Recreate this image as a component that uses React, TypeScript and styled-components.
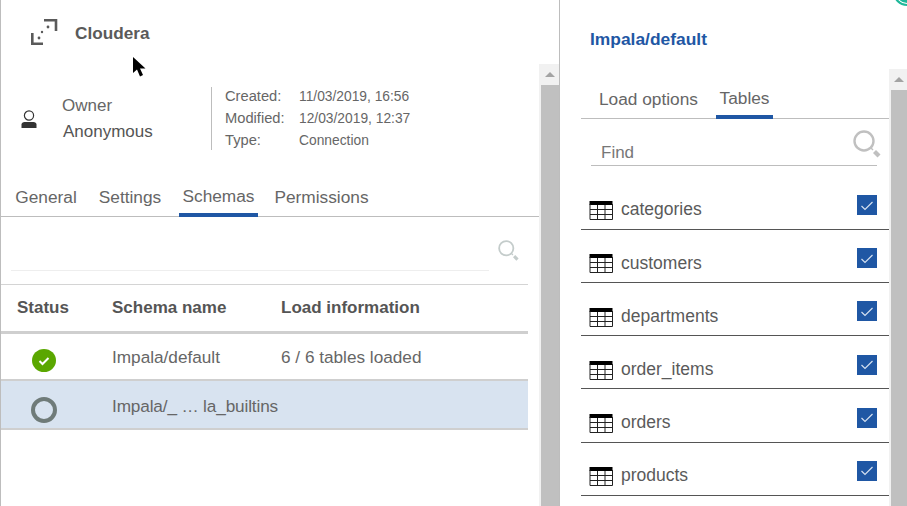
import React from "react";
import styled, { createGlobalStyle } from "styled-components";

const GlobalStyle = createGlobalStyle`
  html, body {
    margin: 0;
    padding: 0;
    background: #fff;
    overflow: hidden;
  }
  * {
    box-sizing: border-box;
  }
`;

const Page = styled.div`
  position: relative;
  display: flex;
  width: 907px;
  height: 506px;
  overflow: hidden;
  font-family: "Liberation Sans", Arial, sans-serif;
  color: #5a5a5a;
`;

const LeftPanel = styled.section`
  display: flex;
  width: 560px;
  flex-shrink: 0;
  border-left: 1px solid #bdbdbd;
  border-right: 1px solid #bdbdbd;
`;

const RightPanel = styled.section`
  display: flex;
  flex: 1;
  min-width: 0;
`;

const Column = styled.div`
  flex: 1;
  min-width: 0;
`;

const RightColumn = styled(Column)`
  padding: 28px 0 0 21px;
`;

const Scrollbar = styled.div<{ $top: number; $width: number }>`
  width: ${(p) => p.$width}px;
  flex-shrink: 0;
  margin-top: ${(p) => p.$top}px;
  padding-left: 2px;
  background: #f1f1f1;
  display: flex;
  flex-direction: column;
`;

const ScrollUp = styled.div`
  height: 21px;
  flex-shrink: 0;
  display: flex;
  align-items: center;
  justify-content: center;
  &::before {
    content: "";
    border-left: 5px solid transparent;
    border-right: 5px solid transparent;
    border-bottom: 5px solid #a3a3a3;
  }
`;

const ScrollThumb = styled.div`
  flex: 1;
  background: #c0c0c0;
`;

const Header = styled.header`
  display: flex;
  align-items: center;
  gap: 17px;
  height: 66px;
  padding-left: 29px;
  svg {
    margin-top: -2px;
  }
`;

const Title = styled.h1`
  margin: 0;
  font-size: 17.2px;
  font-weight: 700;
  color: #5a5a5a;
`;

const Summary = styled.div`
  display: flex;
  height: 63px;
  margin-top: 21px;
`;

const Owner = styled.div`
  display: flex;
  width: 211px;
  align-items: center;
  padding-left: 20px;
  border-right: 1px solid #bdbdbd;
`;

const OwnerText = styled.div`
  margin-left: 25px;
  display: flex;
  flex-direction: column;
  gap: 7px;
`;

const OwnerLabel = styled.span`
  font-size: 17px;
  line-height: 19px;
  color: #666;
`;

const OwnerName = styled.span`
  font-size: 17px;
  line-height: 19px;
  margin-left: 1px;
  color: #555;
`;

const Meta = styled.dl`
  margin: -2px 0 0 13px;
  display: grid;
  grid-template-columns: 74px auto;
  grid-auto-rows: 22px;
  align-items: center;
  color: #666;
  dt,
  dd {
    margin: 0;
  }
  dt {
    font-size: 14.7px;
  }
  dd {
    font-size: 13.8px;
  }
`;

const Tabs = styled.nav<{ $inset: number }>`
  display: flex;
  height: 46px;
  border-bottom: 1px solid #bdbdbd;
  align-items: stretch;
  padding-left: ${(p) => p.$inset}px;
`;

const LeftTabs = styled(Tabs)`
  margin-top: 21px;
`;

const Tab = styled.a<{ $active?: boolean; $width: number }>`
  width: ${(p) => p.$width}px;
  display: flex;
  justify-content: center;
  align-items: flex-end;
  font-size: 17.3px;
  line-height: 20px;
  white-space: nowrap;
  padding-bottom: ${(p) => (p.$active ? 7 : 10)}px;
  color: #666;
  margin-bottom: -1px;
  border-bottom: ${(p) => (p.$active ? "4px solid #1f57a4" : "0 solid transparent")};
`;

const SearchRow = styled.div`
  display: flex;
  height: 68px;
  margin-right: 11px;
  padding-left: 10px;
  border-bottom: 1px solid #d4d4d4;
`;

const SearchField = styled.div`
  flex: 1;
  height: 54px;
  border-bottom: 1px solid #eeeeee;
`;

const SearchButton = styled.div`
  width: 39px;
  padding: 23px 0 0 9px;
`;

const SchemaTable = styled.div`
  margin-right: 11px;
`;

const SchemaHead = styled.div`
  display: grid;
  grid-template-columns: 111px 169px 1fr;
  height: 49px;
  padding-bottom: 1px;
  align-items: center;
  border-bottom: 3px solid #cfcfcf;
  font-size: 17px;
  font-weight: 700;
  color: #555;
`;

const HeadCell = styled.span`
  &:first-child {
    padding-left: 16px;
  }
`;

const SchemaRow = styled.div<{ $selected?: boolean; $height: number }>`
  display: grid;
  grid-template-columns: 111px 169px 1fr;
  height: ${(p) => p.$height}px;
  align-items: start;
  padding-top: ${(p) => (p.$selected ? 2 : 0)}px;
  background: ${(p) => (p.$selected ? "#d8e3f0" : "transparent")};
  border-bottom: 2px solid #cfcfcf;
  font-size: 17.2px;
  line-height: 20px;
  color: #666;
`;

const StatusCell = styled.div`
  display: flex;
  justify-content: center;
  width: 86px;
  margin-top: 15px;
`;

const TextCell = styled.span<{ $tight?: boolean }>`
  margin-top: 13px;
  white-space: nowrap;
  letter-spacing: ${(p) => (p.$tight ? "-0.14px" : "normal")};
`;

const Done = styled.span`
  width: 24px;
  height: 23px;
  border-radius: 50%;
  background: #5aa700;
  display: flex;
  align-items: center;
  justify-content: center;
`;

const Pending = styled.span`
  width: 26px;
  height: 26px;
  margin-top: -1px;
  border-radius: 50%;
  border: 4.5px solid #6f7b79;
`;

const PanelTitle = styled.h2`
  margin: 0 0 0 9px;
  font-size: 17.4px;
  line-height: 22px;
  font-weight: 700;
  color: #1f57a4;
`;

const RightTabs = styled(Tabs)`
  margin-top: 23px;
`;

const Find = styled.div`
  display: flex;
  align-items: flex-end;
  justify-content: space-between;
  height: 47px;
  margin: 0 12px 0 10px;
  border-bottom: 1px solid #bdbdbd;
  padding: 0 0 2px 10px;
  position: relative;
  font-size: 17px;
  color: #777;
`;

const FindIcon = styled.span`
  position: absolute;
  right: -4px;
  top: 11px;
`;

const TableList = styled.ul`
  list-style: none;
  margin: 10.85px 0 0;
  padding: 0;
`;

const TableRow = styled.li`
  display: flex;
  height: 53.15px;
  align-items: flex-start;
  padding: 24.5px 12px 0 8px;
  border-bottom: 1px solid #555;
  font-size: 17.5px;
  line-height: 20px;
  color: #5a5a5a;
`;

const TableName = styled.span`
  flex: 1;
  margin: -1.95px 0 0 8px;
`;

const Check = styled.span`
  width: 20px;
  height: 20px;
  margin-top: -6.2px;
  background: #1f57a4;
  display: flex;
  align-items: center;
  justify-content: center;
`;

const Cursor = styled.svg`
  position: absolute;
  left: 132px;
  top: 57px;
`;

const Corner = styled.span`
  position: absolute;
  right: -14px;
  top: -22px;
  width: 28px;
  height: 28px;
  border-radius: 50%;
  border: 2px solid #1fb89a;
  box-shadow: inset 0 0 0 1px #fff;
  background: #1fb89a;
`;

const Expand = () => (
  <svg width="28" height="26" viewBox="0 0 28 26" fill="none">
    <path d="M14 1.300h12V12M2.300 14v10.700H13" stroke="#5a5a5a" strokeWidth="2.6" />
    <g fill="#5a5a5a">
      <circle cx="18" cy="8" r="1.4" />
      <circle cx="12" cy="13" r="1.2" />
      <circle cx="9" cy="19" r="1.4" />
    </g>
  </svg>
);

const UserIcon = () => (
  <svg width="16" height="18" viewBox="0 0 16 18" fill="none">
    <circle cx="8" cy="5.500" r="4.600" stroke="#333" strokeWidth="1.2" />
    <path d="M0.500 18v-3.500c0-1.600 1.400-2.500 3-2.500h9c1.600 0 3 .9 3 2.500V18z" fill="#333" />
  </svg>
);

const Magnifier = ({ size, color }: { size: number; color: string }) => (
  <svg width={size} height={size} viewBox="0 0 28 28" fill="none">
    <circle cx="11" cy="11" r="9.500" stroke={color} strokeWidth="2.4" />
    <path d="M18 18l2 2" stroke={color} strokeWidth="1.5" />
    <path d="M20 23l3-3 4.500 4.500-3 3z" fill={color} />
  </svg>
);

const GridIcon = () => (
  <svg width="24" height="19" viewBox="0 0 24 19" fill="none">
    <rect x="0.500" y="0" width="23" height="4" fill="#000" />
    <path
      d="M1 3v15.500h22.500V3M1 8.500h22.500M1 13.500h22.500M8.500 4v14.500M16 4v14.500"
      stroke="#222"
      strokeWidth="1"
    />
  </svg>
);

const Tick = () => (
  <svg width="14" height="11" viewBox="0 0 14 11" fill="none">
    <path d="M1.500 6l3.500 3.500L12.500 2" stroke="#d5e0f0" strokeWidth="1.2" />
  </svg>
);

const tables = ["categories", "customers", "departments", "order_items", "orders", "products"];

const App = () => (
  <Page>
    <GlobalStyle />
    <LeftPanel>
      <Column>
        <Header>
          <Expand />
          <Title>Cloudera</Title>
        </Header>
        <Summary>
          <Owner>
            <UserIcon />
            <OwnerText>
              <OwnerLabel>Owner</OwnerLabel>
              <OwnerName>Anonymous</OwnerName>
            </OwnerText>
          </Owner>
          <Meta>
            <dt>Created:</dt>
            <dd>11/03/2019, 16:56</dd>
            <dt>Modified:</dt>
            <dd>12/03/2019, 12:37</dd>
            <dt>Type:</dt>
            <dd>Connection</dd>
          </Meta>
        </Summary>
        <LeftTabs $inset={10}>
          <Tab $width={70}>General</Tab>
          <Tab $width={98}>Settings</Tab>
          <Tab $width={79} $active>
            Schemas
          </Tab>
          <Tab $width={127}>Permissions</Tab>
        </LeftTabs>
        <SearchRow>
          <SearchField />
          <SearchButton>
            <Magnifier size={21} color="#c4cccb" />
          </SearchButton>
        </SearchRow>
        <SchemaTable>
          <SchemaHead>
            <HeadCell>Status</HeadCell>
            <HeadCell>Schema name</HeadCell>
            <HeadCell>Load information</HeadCell>
          </SchemaHead>
          <SchemaRow $height={47}>
            <StatusCell>
              <Done>
                <svg width="12" height="10" viewBox="0 0 12 10" fill="none">
                  <path d="M1.500 5l3 3 6-6" stroke="#fff" strokeWidth="2" />
                </svg>
              </Done>
            </StatusCell>
            <TextCell>Impala/default</TextCell>
            <TextCell>6 / 6 tables loaded</TextCell>
          </SchemaRow>
          <SchemaRow $height={49} $selected>
            <StatusCell>
              <Pending />
            </StatusCell>
            <TextCell $tight>Impala/_ … la_builtins</TextCell>
            <span />
          </SchemaRow>
        </SchemaTable>
      </Column>
      <Scrollbar $top={64} $width={20}>
        <ScrollUp />
        <ScrollThumb />
      </Scrollbar>
    </LeftPanel>
    <RightPanel>
      <RightColumn>
        <PanelTitle>Impala/default</PanelTitle>
        <RightTabs $inset={0}>
          <Tab $width={135}>Load options</Tab>
          <Tab $width={57} $active>
            Tables
          </Tab>
        </RightTabs>
        <Find>
          Find
          <FindIcon>
            <Magnifier size={28} color="#c0c0c0" />
          </FindIcon>
        </Find>
        <TableList>
          {tables.map((name) => (
            <TableRow key={name}>
              <GridIcon />
              <TableName>{name}</TableName>
              <Check>
                <Tick />
              </Check>
            </TableRow>
          ))}
        </TableList>
      </RightColumn>
      <Scrollbar $top={69} $width={18}>
        <ScrollUp />
        <ScrollThumb />
      </Scrollbar>
    </RightPanel>
    <Cursor width="14" height="22" viewBox="0 0 14 22">
      <path d="M1 0v16l4-3.500 3 7 3-1.500-3-6.500h5.500z" fill="#000" />
    </Cursor>
    <Corner />
  </Page>
);

export default App;
